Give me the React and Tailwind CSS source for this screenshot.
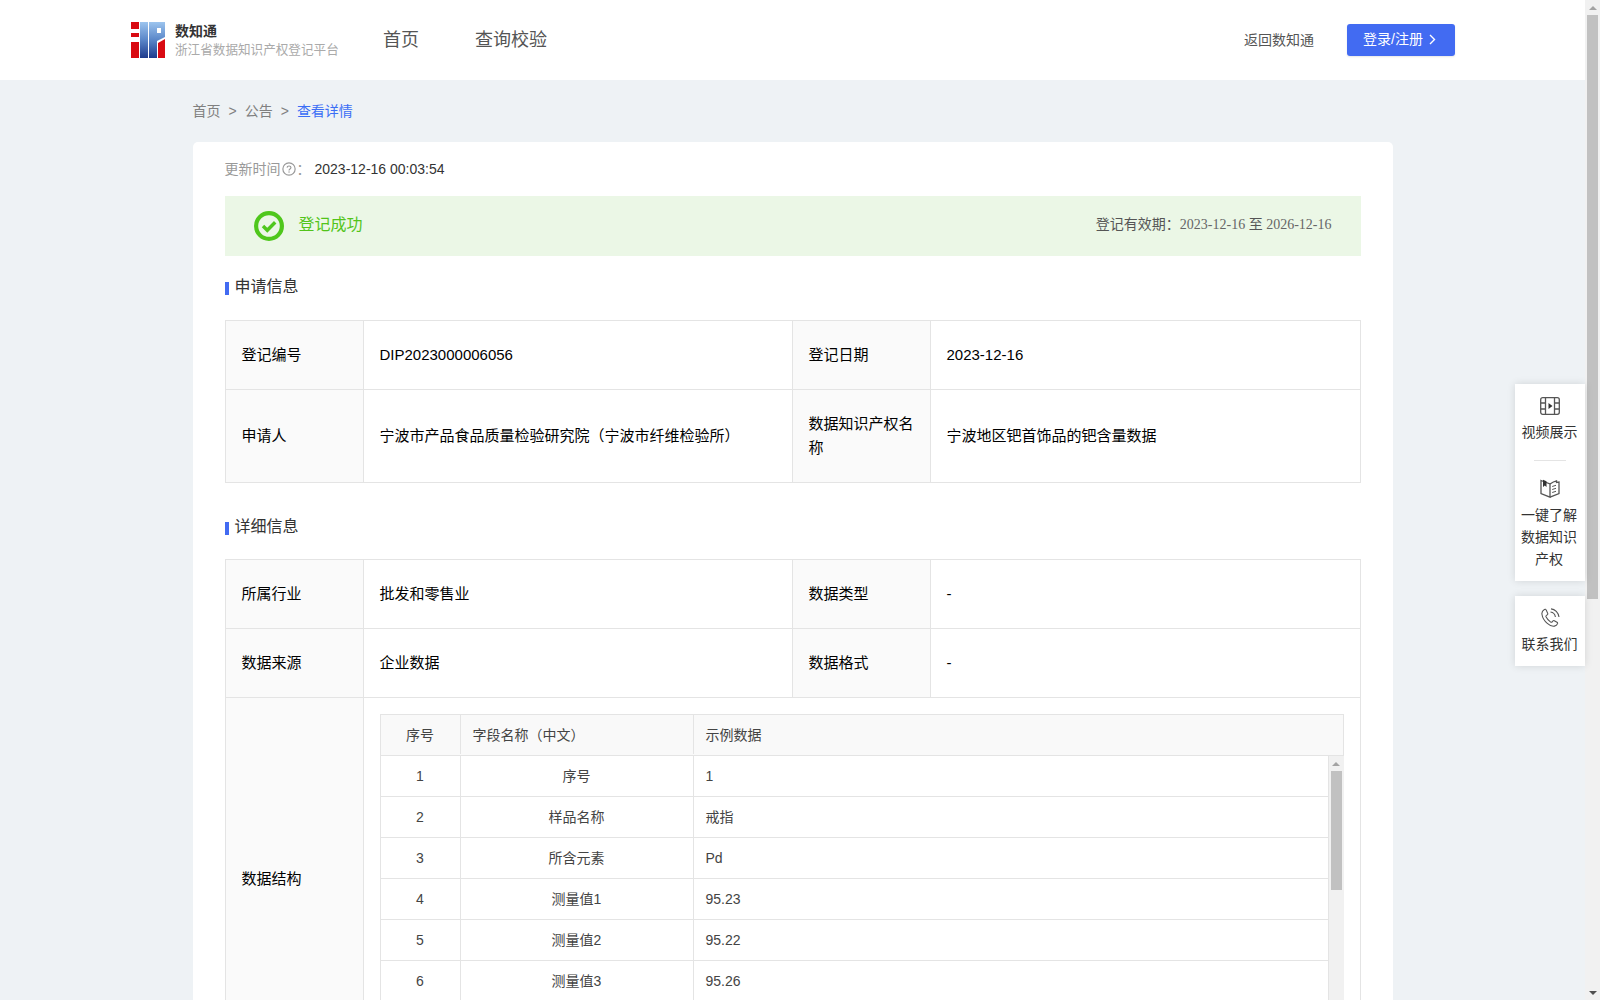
import React from "react";

const rows = [
  ["1", "序号", "1"],
  ["2", "样品名称", "戒指"],
  ["3", "所含元素", "Pd"],
  ["4", "测量值1", "95.23"],
  ["5", "测量值2", "95.22"],
  ["6", "测量值3", "95.26"],
];

function Logo() {
  return (
    <svg width="34" height="36" viewBox="0 0 34 36" className="shrink-0">
      <defs>
        <linearGradient id="logoBlue" x1="0" y1="0" x2="0" y2="36" gradientUnits="userSpaceOnUse">
          <stop offset="0" stopColor="#9cc4ee" />
          <stop offset="0.5" stopColor="#5a86c8" />
          <stop offset="1" stopColor="#1d3a8c" />
        </linearGradient>
      </defs>
      <rect x="0" y="0" width="8" height="7" fill="#d90a12" />
      <rect x="0" y="11" width="8" height="4" fill="#d90a12" />
      <rect x="0" y="20" width="8" height="16" fill="#d90a12" />
      <rect x="9" y="0" width="8" height="36" fill="url(#logoBlue)" />
      <path d="M18 0H34V15L26 19V36H18Z" fill="url(#logoBlue)" />
      <rect x="26" y="6" width="4" height="5" fill="#fff" />
      <path d="M27 21L34 17V36H27Z" fill="#d90a12" />
    </svg>
  );
}

function CheckIcon() {
  return (
    <svg width="30" height="30" viewBox="0 0 30 30" fill="none" className="shrink-0">
      <circle cx="15" cy="15" r="12.9" stroke="#4fc71c" strokeWidth="4.2" />
      <path d="M9 15L13.3 19.3L21.2 11.3" stroke="#4fc71c" strokeWidth="3.4" />
    </svg>
  );
}

function HelpIcon() {
  return (
    <svg width="14" height="14" viewBox="0 0 13 13" fill="none" className="mx-[1px] shrink-0">
      <circle cx="6.5" cy="6.5" r="5.7" stroke="#999" strokeWidth="1.1" />
      <path d="M4.7 5.2C4.8 3.2 8.3 3.2 8.3 5.2C8.3 6.5 6.5 6.4 6.5 7.8" stroke="#999" strokeWidth="1.1" />
      <rect x="6" y="8.7" width="1.1" height="1.2" fill="#999" />
    </svg>
  );
}

function FilmIcon() {
  return (
    <svg width="20" height="18" viewBox="0 0 20 18" fill="none" stroke="#555" strokeWidth="1.3">
      <rect x="0.7" y="0.7" width="18.6" height="16.6" rx="2" />
      <path d="M5.5 1V17M14.5 1V17M1 6H5.5M1 12H5.5M14.5 6H19M14.5 12H19" />
      <path d="M8.5 6L12.5 9L8.5 12Z" fill="#333" stroke="none" />
    </svg>
  );
}

function BookIcon() {
  return (
    <svg width="20" height="19" viewBox="0 0 20 19" fill="none" stroke="#555" strokeWidth="1.3">
      <path d="M1 1.5L10 5V18.2L1 14.5Z" />
      <path d="M10 5C12 3.5 14.5 2.2 16.5 1.8V3.5L19 3V14.5L10 18.2" />
      <path d="M3 0.8L6.5 2.3V8L4.8 6.6L3 8Z" fill="#333" stroke="none" />
      <path d="M12.2 7.5L16 6.3M12.2 10.5L16 9.3M12.2 13.5L16 12.3" strokeWidth="1" />
    </svg>
  );
}

function PhoneIcon() {
  return (
    <svg width="19" height="19" viewBox="0 0 19 19" fill="none" stroke="#555" strokeWidth="1.1">
      <path d="M3.4 1.4C1.6 2.4 0.7 4 0.9 6C1.3 9 3.2 12.8 6.3 15.4C8.8 17.6 11.5 18.6 13.5 18.1C15 17.7 16.3 16.5 16.6 15.4C16.7 14.9 16.5 14.6 16 14.3L13.3 12.7C12.8 12.4 12.4 12.5 12 12.9L11 14C10.6 14.4 10.2 14.4 9.7 14.1C7.7 12.8 6 10.8 5 8.8C4.8 8.3 4.8 7.9 5.3 7.6L6.4 6.7C6.8 6.3 6.9 5.9 6.7 5.4L5.2 2C4.9 1.2 4.2 1 3.4 1.4Z" />
      <path d="M9.5 4C12 4.3 14 6.2 14.4 9M10 0.9C14 1.2 17.4 4.6 18 9" />
    </svg>
  );
}

function ArrowUp({ color }) {
  return <div className={`h-0 w-0 border-x-[4px] border-b-[4px] border-x-transparent ${color}`}></div>;
}

function SectionTitle({ children, className }) {
  return (
    <div className={`flex items-center ${className}`}>
      <span className="mt-[2px] h-[13px] w-[4px] bg-[#426bf2]"></span>
      <span className="ml-[6px] text-base leading-5 text-[#333]">{children}</span>
    </div>
  );
}

function InfoTable({ children }) {
  return (
    <table className="w-[1135px] table-fixed border-collapse text-[15px] text-black">
      <colgroup>
        <col className="w-[138px]" />
        <col className="w-[429px]" />
        <col className="w-[138px]" />
        <col className="w-[430px]" />
      </colgroup>
      <tbody>{children}</tbody>
    </table>
  );
}

function Label({ children, ...props }) {
  return (
    <td {...props} className="border border-[#e4e4e4] bg-[#fafafa] px-4 leading-6">
      {children}
    </td>
  );
}

function Value({ children, ...props }) {
  return (
    <td {...props} className="border border-[#e4e4e4] px-4 leading-6">
      {children}
    </td>
  );
}

function SchemaTable() {
  return (
    <div className="w-[964px] text-sm text-[#444]">
      <div className="flex h-[42px] items-center border border-[#e4e4e4] bg-[#f9f9f9] pb-[1px]">
        <div className="flex h-full w-[80px] items-center justify-center border-r border-[#e4e4e4]">序号</div>
        <div className="flex h-full w-[233px] items-center border-r border-[#e4e4e4] pl-3">字段名称（中文）</div>
        <div className="pl-3">示例数据</div>
      </div>
      <div className="flex h-[288px] overflow-hidden">
        <div className="flex-1">
          {rows.map((r) => (
            <div key={r[0]} className="flex h-[41px] items-center border-x border-b border-[#e4e4e4]">
              <div className="flex h-full w-[80px] items-center justify-center border-r border-[#e4e4e4]">{r[0]}</div>
              <div className="flex h-full w-[233px] items-center justify-center border-r border-[#e4e4e4]">{r[1]}</div>
              <div className="pl-3">{r[2]}</div>
            </div>
          ))}
        </div>
        <div className="flex w-[15px] flex-col items-center bg-[#f1f1f1]">
          <div className="flex h-[15px] items-center">
            <ArrowUp color="border-b-[#a3a3a3]" />
          </div>
          <div className="h-[119px] w-[11px] bg-[#c1c1c1]"></div>
        </div>
      </div>
    </div>
  );
}

export default function App() {
  return (
    <div className="flex h-screen overflow-hidden bg-[#eef2f5] font-['Liberation_Sans','Noto_Sans_CJK_SC',sans-serif]">
      <div className="relative flex-1">
        <header className="flex h-20 items-center bg-white pl-[131px] pr-[130px]">
          <Logo />
          <div className="ml-[10px] w-[165px]">
            <div className="text-sm leading-5 font-bold text-[#333]">数知通</div>
            <div className="whitespace-nowrap text-[12.6px] leading-[18px] text-[#aaa]">浙江省数据知识产权登记平台</div>
          </div>
          <nav className="ml-[43px] flex gap-[56px] text-lg text-[#555]">
            <a>首页</a>
            <a>查询校验</a>
          </nav>
          <a className="ml-auto pb-[1px] text-sm text-[#555]">返回数知通</a>
          <button className="ml-[33px] flex h-8 w-[108px] items-center justify-center gap-[6px] rounded-[3px] bg-[#426bf2] pb-[2px] pr-[3px] text-sm text-white shadow-[0_1px_2px_rgba(0,0,0,0.1)]">
            登录/注册
            <svg width="7" height="11" viewBox="0 0 7 11" fill="none" stroke="#fff" strokeWidth="1.4">
              <path d="M1 1L5.5 5.5L1 10" />
            </svg>
          </button>
        </header>

        <div className="mx-auto w-[1200px]">
          <div className="flex h-[62px] items-center gap-[8px] text-sm text-[#808080]">
            <span>首页</span>
            <span>&gt;</span>
            <span>公告</span>
            <span>&gt;</span>
            <span className="text-[#3b6ef5]">查看详情</span>
          </div>

          <main className="rounded-t-[5px] bg-white px-8 pt-[17px]">
            <div className="flex h-5 items-center text-sm">
              <span className="text-[#999]">更新时间</span>
              <HelpIcon />
              <span className="w-[18px] text-[#999]">：</span>
              <span className="text-[#333]">2023-12-16 00:03:54</span>
            </div>

            <div className="mt-[17px] flex h-[60px] items-center bg-[#ebf7e6] pl-[29px] pr-[29px]">
              <CheckIcon />
              <span className="ml-[15px] pb-[2px] text-base text-[#52c41a]">登记成功</span>
              <span className="ml-auto pb-[3px] text-sm text-[#555]">
                登记有效期：
                <span className="font-['Liberation_Serif','Noto_Sans_CJK_SC',serif] text-[#666]">2023-12-16 </span>
                至
                <span className="font-['Liberation_Serif','Noto_Sans_CJK_SC',serif] text-[#666]"> 2026-12-16</span>
              </span>
            </div>

            <SectionTitle className="mt-[21px] h-5">申请信息</SectionTitle>

            <div className="mt-[23px]">
              <InfoTable>
                <tr className="h-[69px]">
                  <Label>登记编号</Label>
                  <Value>DIP2023000006056</Value>
                  <Label>登记日期</Label>
                  <Value>2023-12-16</Value>
                </tr>
                <tr className="h-[93px]">
                  <Label>申请人</Label>
                  <Value>宁波市产品食品质量检验研究院（宁波市纤维检验所）</Value>
                  <Label>数据知识产权名称</Label>
                  <Value>宁波地区钯首饰品的钯含量数据</Value>
                </tr>
              </InfoTable>
            </div>

            <SectionTitle className="mt-[34px] h-5">详细信息</SectionTitle>

            <div className="mt-[22px]">
              <InfoTable>
                <tr className="h-[69px]">
                  <Label>所属行业</Label>
                  <Value>批发和零售业</Value>
                  <Label>数据类型</Label>
                  <Value>-</Value>
                </tr>
                <tr className="h-[69px]">
                  <Label>数据来源</Label>
                  <Value>企业数据</Value>
                  <Label>数据格式</Label>
                  <Value>-</Value>
                </tr>
                <tr>
                  <Label>数据结构</Label>
                  <td colSpan={3} className="border border-[#e4e4e4] p-4">
                    <SchemaTable />
                  </td>
                </tr>
              </InfoTable>
            </div>
          </main>
        </div>

        <div className="absolute right-0 top-[384px] w-[70px] text-center text-sm leading-[22px] text-[#333]">
          <div className="flex h-[197px] flex-col items-center bg-white pt-[13px] shadow-[0_0_8px_rgba(0,0,0,0.12)]">
            <FilmIcon />
            <div className="mt-[6px] pr-[1px]">视频展示</div>
            <div className="mb-[18px] mt-[17px] h-px w-8 bg-[#e4e4e4]"></div>
            <BookIcon />
            <div className="mt-[6px] pl-[3px] pr-[5px]">一键了解数据知识产权</div>
          </div>
          <div className="mt-[15px] flex h-[70px] flex-col items-center bg-white pt-[12px] shadow-[0_0_8px_rgba(0,0,0,0.12)]">
            <PhoneIcon />
            <div className="mt-[6px] pr-[1px]">联系我们</div>
          </div>
        </div>
      </div>

      <div className="flex w-[15px] flex-col items-center bg-[#f1f1f1]">
        <div className="flex h-[15px] items-center">
          <ArrowUp color="border-b-[#a3a3a3]" />
        </div>
        <div className="h-[584px] w-[11px] bg-[#c1c1c1]"></div>
        <div className="mt-auto flex h-[15px] items-center">
          <div className="h-0 w-0 border-x-[4px] border-t-[4px] border-x-transparent border-t-[#505050]"></div>
        </div>
      </div>
    </div>
  );
}
